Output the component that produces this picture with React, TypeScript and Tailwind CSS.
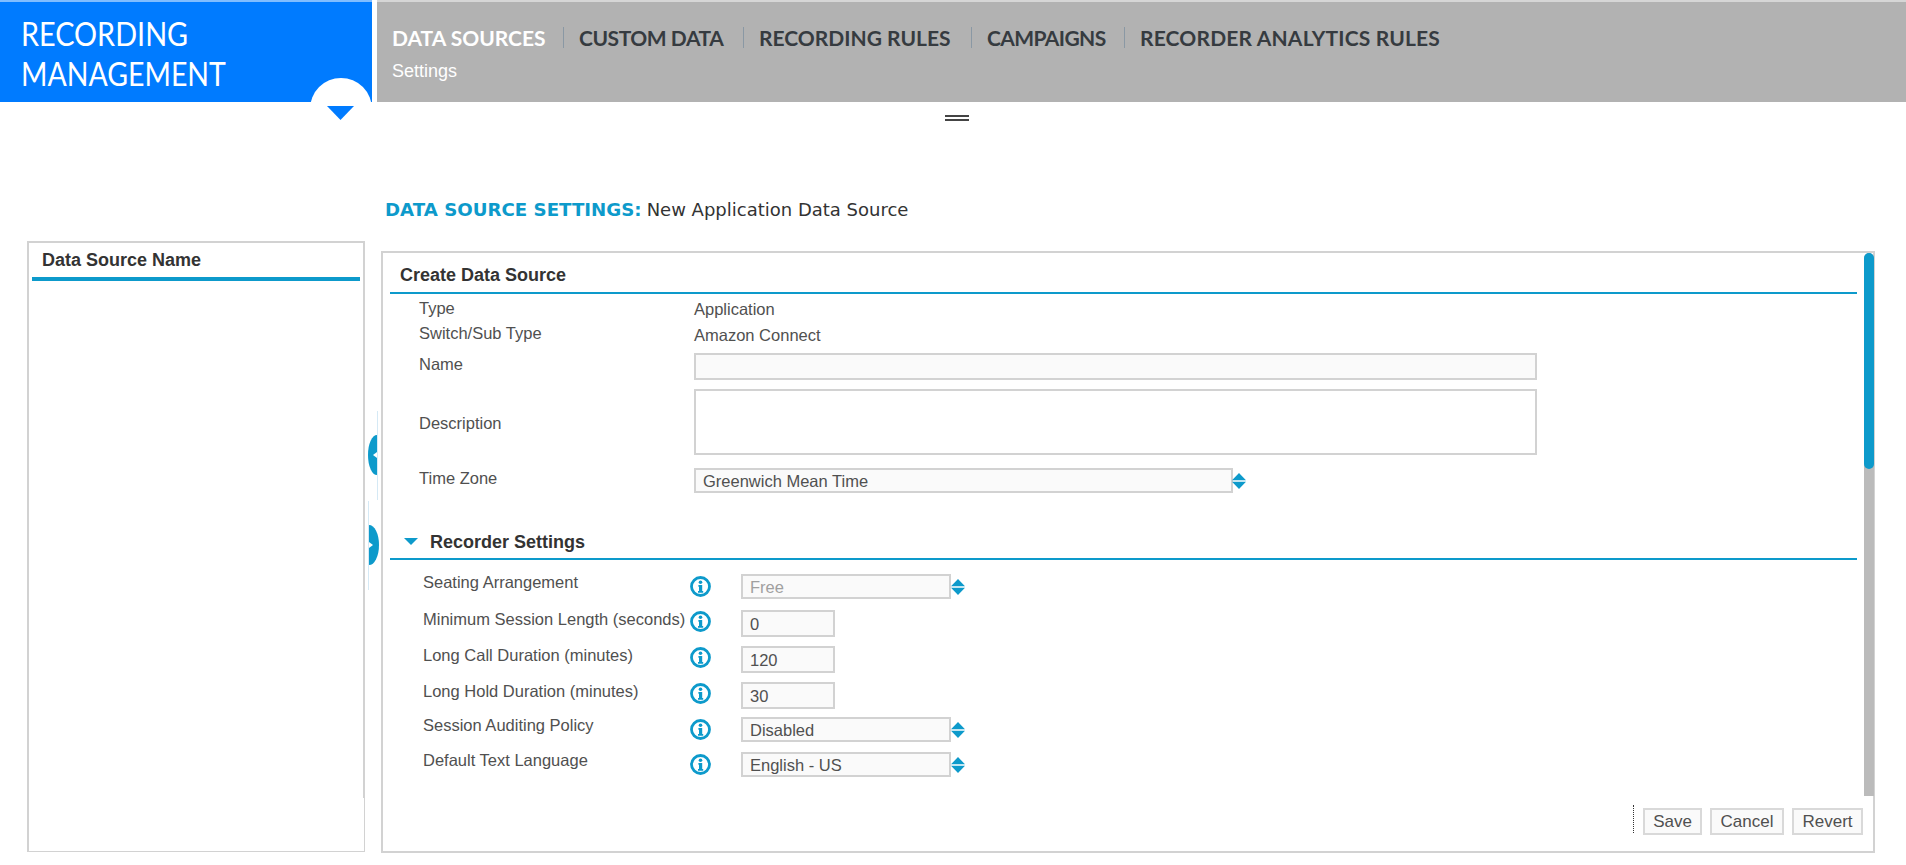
import React from "react";

const ARIAL = "font-['Liberation_Sans',Arial,sans-serif]";

function Info() {
  return (
    <svg width="21" height="21" viewBox="0 0 21 21" className="shrink-0">
      <circle cx="10.5" cy="10.5" r="9" fill="none" stroke="#0d9acb" strokeWidth="2.8" />
      <circle cx="10.5" cy="6.3" r="1.8" fill="#0d9acb" />
      <path d="M8.4 9h3.8v6h1v1.7H8v-1.7h1v-4.3H8.4z" fill="#0d9acb" />
    </svg>
  );
}

function Spinner({ className = "" }: { className?: string }) {
  return (
    <svg width="14" height="16" viewBox="0 0 14 16" className={`shrink-0 ${className}`}>
      <path d="M7 0L14 7.3H0z M0 8.7H14L7 16z" fill="#0d9acb" />
    </svg>
  );
}

function TopRow({
  label,
  h,
  children,
  labelClass = "",
}: {
  label: string;
  h: string;
  children: React.ReactNode;
  labelClass?: string;
}) {
  return (
    <div className={`flex items-center ${h}`}>
      <div className={`w-[275px] shrink-0 text-[16.5px] leading-[18px] text-[#505050] ${labelClass}`}>{label}</div>
      {children}
    </div>
  );
}

function Field({ w, h, children, muted }: { w: string; h: string; children?: React.ReactNode; muted?: boolean }) {
  return (
    <div
      className={`${w} ${h} border-2 border-[#d2d2d2] bg-[#fafafa] flex items-center pl-[7px] text-[16.5px] leading-[18px] ${
        muted ? "text-[#a0a0a0]" : "text-[#505050]"
      }`}
    >
      {children}
    </div>
  );
}

const recorder: { label: string; value: string; kind: "select" | "input"; muted?: boolean }[] = [
  { label: "Seating Arrangement", value: "Free", kind: "select", muted: true },
  { label: "Minimum Session Length (seconds)", value: "0", kind: "input" },
  { label: "Long Call Duration (minutes)", value: "120", kind: "input" },
  { label: "Long Hold Duration (minutes)", value: "30", kind: "input" },
  { label: "Session Auditing Policy", value: "Disabled", kind: "select" },
  { label: "Default Text Language", value: "English - US", kind: "select" },
];

function RecorderRow({ r, mt }: { r: (typeof recorder)[number]; mt: string }) {
  const isSelect = r.kind === "select";
  return (
    <div className={`flex items-center pl-[33px] ${mt} ${isSelect ? "h-[25px]" : "h-[27px]"}`}>
      <div className="w-[267px] shrink-0 pb-[9px] text-[16.5px] leading-[18px] whitespace-nowrap text-[#505050]">
        {r.label}
      </div>
      <div className={`w-[51px] shrink-0 ${isSelect ? "" : "pb-[5px]"}`}>
        <Info />
      </div>
      {isSelect ? (
        <>
          <Field w="w-[210px]" h="h-[25px]" muted={r.muted}>
            {r.value}
          </Field>
          <Spinner />
        </>
      ) : (
        <Field w="w-[94px]" h="h-[27px]">
          {r.value}
        </Field>
      )}
    </div>
  );
}

const nav: { label: string; cls: string }[] = [
  { label: "DATA SOURCES", cls: "w-[172px] border-r border-[#8a98a4] text-white" },
  { label: "CUSTOM DATA", cls: "w-[180px] border-r border-[#8a98a4] pl-[15px] text-[#363b40] tracking-[-0.45px]" },
  { label: "RECORDING RULES", cls: "w-[228px] border-r border-[#8a98a4] pl-[15px] text-[#363b40]" },
  { label: "CAMPAIGNS", cls: "w-[153px] border-r border-[#8a98a4] pl-[15px] text-[#363b40] tracking-[-0.6px]" },
  { label: "RECORDER ANALYTICS RULES", cls: "pl-[15px] text-[#363b40] tracking-[0.17px]" },
];

export default function App() {
  return (
    <div className={`relative h-[865px] w-full overflow-hidden bg-white ${ARIAL}`}>
      <header className="flex h-[102px] gap-[5px]">
        <div className="relative w-[372px] shrink-0 border-t-2 border-[#80bdff] bg-[#007bff] pl-[21px] pt-[12px] font-['Lato',sans-serif] text-[32px] leading-[40px] text-white">
          <div className="origin-left scale-x-[0.9] whitespace-nowrap">RECORDING</div>
          <div className="origin-left scale-x-[0.89] whitespace-nowrap">MANAGEMENT</div>
          <div className="absolute left-[310px] top-[76px] h-[62px] w-[62px] rounded-full bg-white" />
          <svg width="27" height="14" viewBox="0 0 27 14" className="absolute left-[327px] top-[104px]">
            <path d="M0 0H27L13.5 14z" fill="#007bff" />
          </svg>
        </div>
        <div className="flex-1 border-t-2 border-[#d6d6d6] bg-[#b2b2b2] pl-[15px]">
          <nav className="mt-[25px] flex h-[21px] items-center font-['Lato',sans-serif] text-[21px] font-bold leading-[21px]">
            {nav.map((n) => (
              <span key={n.label} className={`whitespace-nowrap ${n.cls}`}>
                {n.label}
              </span>
            ))}
          </nav>
          <div className="mt-[13px] text-[18px] leading-[20px] text-white">Settings</div>
        </div>
      </header>

      <div className="flex h-[139px] flex-col">
        <div className="ml-[945px] mt-[13px] flex w-[24px] flex-col gap-[2px]">
          <div className="h-[2px] bg-[#444]" />
          <div className="h-[2px] bg-[#444]" />
        </div>
        <div className="ml-[385px] mt-[79px] flex items-center whitespace-nowrap font-['DejaVu_Sans',Verdana,sans-serif] leading-[20px]">
          <span className="text-[18.2px] font-bold text-[#0d9acb]">DATA SOURCE SETTINGS:</span>
          <span className="ml-[5px] text-[18px] text-[#333]">New Application Data Source</span>
        </div>
      </div>

      <main className="flex h-[612px] pl-[27px]">
        <section className="relative h-[611px] w-[338px] shrink-0 border-x-2 border-t-2 border-b border-[#d2d2d2] px-[3px]">
          <div className="h-[38px] border-b-4 border-[#0d9acb] pl-[10px] pt-[7px] text-[18px] font-bold leading-[20px] text-[#333]">
            Data Source Name
          </div>
          <div className="absolute bottom-0 right-[-1px] h-[53px] w-px bg-white" />
        </section>

        <section className="relative ml-[16px] mt-[10px] flex w-[1494px] shrink-0 flex-col border-2 border-[#d2d2d2]">
          <div className="flex-1 overflow-hidden pl-[7px] pr-[16px]">
            <div className="h-[41px] border-b-2 border-[#0d9acb] pl-[10px] pt-[12px] text-[18px] font-bold leading-[20px] text-[#333]">
              Create Data Source
            </div>
            <div className="mt-[2px] pl-[29px]">
              <TopRow label="Type" h="h-[26px]" labelClass="pb-[2px]">
                <span className="text-[16.5px] leading-[18px] text-[#505050]">Application</span>
              </TopRow>
              <TopRow label="Switch/Sub Type" h="h-[26px]" labelClass="pb-[4px]">
                <span className="text-[16.5px] leading-[18px] text-[#505050]">Amazon Connect</span>
              </TopRow>
              <div className="mt-[5px]">
                <TopRow label="Name" h="h-[27px]" labelClass="pb-[5px]">
                  <Field w="w-[843px]" h="h-[27px]" />
                </TopRow>
              </div>
              <div className="mt-[9px]">
                <TopRow label="Description" h="h-[66px]" labelClass="pt-[2px]">
                  <div className="h-[66px] w-[843px] border-2 border-[#d2d2d2] bg-white" />
                </TopRow>
              </div>
              <div className="mt-[13px]">
                <TopRow label="Time Zone" h="h-[25px]" labelClass="pb-[5px]">
                  <Field w="w-[539px]" h="h-[25px]">
                    Greenwich Mean Time
                  </Field>
                  <Spinner className="-ml-px" />
                </TopRow>
              </div>
            </div>

            <div className="mt-[29px] flex h-[38px] items-center border-b-2 border-[#0d9acb] pl-[14px]">
              <svg width="14" height="7" viewBox="0 0 14 7" className="mt-[3px]">
                <path d="M0 0H14L7 7z" fill="#0d9acb" />
              </svg>
              <span className="ml-[12px] mt-[3px] text-[18px] font-bold leading-[20px] text-[#333]">Recorder Settings</span>
            </div>

            <RecorderRow r={recorder[0]} mt="mt-[14px]" />
            <RecorderRow r={recorder[1]} mt="mt-[11px]" />
            <RecorderRow r={recorder[2]} mt="mt-[9px]" />
            <RecorderRow r={recorder[3]} mt="mt-[9px]" />
            <RecorderRow r={recorder[4]} mt="mt-[8px]" />
            <RecorderRow r={recorder[5]} mt="mt-[10px]" />
          </div>

          <footer className="flex h-[46px] shrink-0 items-start justify-end gap-[8px] pr-[10px] text-[17px] text-[#505050]">
            <div className="mr-px h-[28px] border-l border-dotted border-[#333]" />
            <button className="mt-[3px] h-[27px] w-[59px] border-2 border-[#d9d9d9] bg-[#fafafa] leading-none">Save</button>
            <button className="mt-[3px] h-[27px] w-[74px] border-2 border-[#d9d9d9] bg-[#fafafa] leading-none">Cancel</button>
            <button className="mt-[3px] h-[27px] w-[71px] border-2 border-[#d9d9d9] bg-[#fafafa] leading-none">Revert</button>
          </footer>

          <div className="absolute right-[-1px] top-0 flex h-[543px] w-[10px] flex-col rounded-t-full bg-[#bbbbbb]">
            <div className="h-[216px] rounded-full bg-[#0d9acb]" />
          </div>
        </section>
      </main>

      <div className="absolute left-[368px] top-[411px] h-[89px] w-[10px] border-r border-[#d5e9f5]">
        <div className="absolute left-0 top-[24px] flex h-[40px] w-[9px] items-center justify-end rounded-l-[9px_20px] bg-[#0d9acb]">
          <div className="h-0 w-0 border-y-[3px] border-r-[4px] border-y-transparent border-r-white" />
        </div>
      </div>
      <div className="absolute left-[368px] top-[501px] h-[89px] w-[10px] border-l border-[#d5e9f5]">
        <div className="absolute left-0 top-[24px] flex h-[40px] w-[10px] items-center rounded-r-[10px_20px] bg-[#0d9acb]">
          <div className="h-0 w-0 border-y-[3px] border-l-[4px] border-y-transparent border-l-white" />
        </div>
      </div>
    </div>
  );
}
